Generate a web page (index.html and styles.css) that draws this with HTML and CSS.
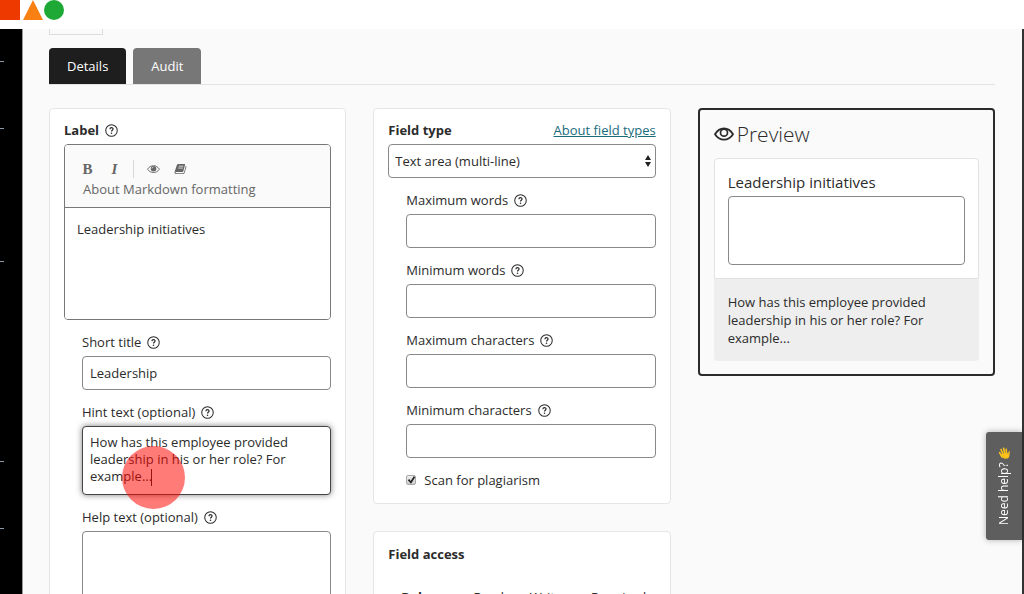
FILE: index.html
```html
<!DOCTYPE html>
<html lang="en">

<head>
  <meta charset="UTF-8">
  <meta name="viewport" content="width=device-width, initial-scale=1.0">
  <title>Edit field</title>
  <link rel="stylesheet" href="styles.css">
</head>

<body>

  <!-- shared icon for the help buttons -->
  <svg class="sprite" aria-hidden="true">
    <symbol id="help" viewBox="0 0 14 14">
      <circle cx="7" cy="7" r="6.2" fill="none" stroke="currentColor" stroke-width="1.1"/>
      <path d="M5.3 5.6C5.3 3.5 8.7 3.5 8.7 5.5C8.7 6.8 7 6.7 7 8.2" fill="none" stroke="currentColor" stroke-width="1.3"/>
      <circle cx="7" cy="10" r=".85" fill="currentColor"/>
    </symbol>
  </svg>

  <header class="topbar">
    <svg class="logo" viewBox="0 0 64 20" aria-hidden="true">
      <rect width="20" height="20" fill="#ee3a00"/>
      <path d="M33 0L43 20H23Z" fill="#f98012"/>
      <circle cx="54" cy="10" r="10" fill="#1ea836"/>
    </svg>
  </header>

  <div class="app">
    <nav class="sidebar">
      <ul class="marks"><li></li><li></li></ul>
      <ul class="marks"><li></li></ul>
      <ul class="marks marks-far"><li></li><li></li></ul>
    </nav>

    <main class="content">
      <div class="crumb"></div>

      <div class="tabs">
        <button type="button" class="tab active">Details</button>
        <button type="button" class="tab">Audit</button>
      </div>

      <div class="columns">
        <section class="card">
          <div class="label-row">
            <label class="strong" for="label">Label</label>
            <button type="button" class="help" aria-label="Help"><svg><use href="#help"/></svg></button>
          </div>
          <div class="editor">
            <div class="toolbar">
              <div class="tools">
                <button type="button" class="tool">B</button>
                <button type="button" class="tool italic">I</button>
                <span class="divider"></span>
                <button type="button" class="tool" aria-label="Preview">
                  <svg viewBox="0 0 14 12">
                    <path d="M.6 6.2C3.8 1.2 10.2 1.2 13.4 6.2C10.2 11 3.8 11 .6 6.2Z" fill="none" stroke="currentColor"/>
                    <circle cx="7" cy="5.7" r="3" fill="currentColor"/>
                    <path d="M5.3 5.5Q5.4 4 7 3.9" fill="none" stroke="#fff" stroke-width=".7"/>
                  </svg>
                </button>
                <button type="button" class="tool" aria-label="Guide">
                  <svg viewBox="0 0 14 12">
                    <path d="M4.5 .7H11.2Q12.2 .7 11.9 1.7L10 8.3Q9.7 9.2 8.8 9.2H2.4Q1.3 9.2 1.6 10Q1.8 10.5 2.6 10.5H9.7Q10.5 10.5 10.8 9.6L12.8 2.6Q13.6 3 13.3 3.9L11.4 10.3Q11 11.5 9.8 11.5H2.4Q.9 11.5 .6 10.1Q.5 9.4 .8 8.8L3 2Q3.4 .7 4.5 .7Z" fill="currentColor"/>
                    <path d="M5.2 3H10.1M4.6 5H9.5" stroke="#fafafa" stroke-width=".8"/>
                  </svg>
                </button>
              </div>
              <a class="md-link" href="#">About Markdown formatting</a>
            </div>
            <textarea id="label" class="editor-text">Leadership initiatives</textarea>
          </div>

          <div class="indent">
            <div class="label-row">
              <label for="short">Short title</label>
              <button type="button" class="help" aria-label="Help"><svg><use href="#help"/></svg></button>
            </div>
            <input type="text" class="control" id="short" value="Leadership">

            <div class="label-row">
              <label for="hint">Hint text (optional)</label>
              <button type="button" class="help" aria-label="Help"><svg><use href="#help"/></svg></button>
            </div>
            <div class="hint">
              <textarea class="control area focused" id="hint">How has this employee provided leadership in his or her role? For example...</textarea>
              <span class="caret"></span>
              <span class="click-spot"></span>
            </div>

            <div class="label-row">
              <label for="helptext">Help text (optional)</label>
              <button type="button" class="help" aria-label="Help"><svg><use href="#help"/></svg></button>
            </div>
            <textarea class="control area tall" id="helptext"></textarea>
          </div>
        </section>

        <div class="stack">
          <section class="card">
            <div class="label-row">
              <label class="strong" for="type">Field type</label>
              <a class="about" href="#">About field types</a>
            </div>
            <div class="select">
              <select class="control" id="type">
                <option>Text area (multi-line)</option>
              </select>
              <svg class="arrows" viewBox="0 0 6 12" aria-hidden="true"><path d="M0 5L3 0L6 5ZM0 7L3 12L6 7Z" fill="#222"/></svg>
            </div>

            <div class="indent">
              <div class="label-row">
                <label for="maxw">Maximum words</label>
                <button type="button" class="help" aria-label="Help"><svg><use href="#help"/></svg></button>
              </div>
              <input type="text" class="control" id="maxw">

              <div class="label-row">
                <label for="minw">Minimum words</label>
                <button type="button" class="help" aria-label="Help"><svg><use href="#help"/></svg></button>
              </div>
              <input type="text" class="control" id="minw">

              <div class="label-row">
                <label for="maxc">Maximum characters</label>
                <button type="button" class="help" aria-label="Help"><svg><use href="#help"/></svg></button>
              </div>
              <input type="text" class="control" id="maxc">

              <div class="label-row">
                <label for="minc">Minimum characters</label>
                <button type="button" class="help" aria-label="Help"><svg><use href="#help"/></svg></button>
              </div>
              <input type="text" class="control" id="minc">

              <label class="check"><input type="checkbox" checked>Scan for plagiarism</label>
            </div>
          </section>

          <section class="card">
            <h2 class="card-title">Field access</h2>
            <table class="access">
              <thead>
                <tr><th class="col-role">Role</th><td class="col-read">Read</td><td class="col-write">Write</td><td>Required</td></tr>
              </thead>
            </table>
          </section>
        </div>

        <section class="preview">
          <h2 class="preview-title">
            <svg viewBox="0 0 20 14" aria-hidden="true">
              <path d="M1 7.2C5.5-.4 14.5-.4 19 7.2C14.5 14.4 5.5 14.4 1 7.2Z" fill="none" stroke="currentColor" stroke-width="1.8"/>
              <circle cx="10" cy="5.7" r="3.5" fill="none" stroke="currentColor" stroke-width="1.7"/>
            </svg>
            Preview
          </h2>
          <div class="preview-field">
            <label for="sample">Leadership initiatives</label>
            <textarea class="control area" id="sample"></textarea>
          </div>
          <p class="preview-hint">How has this employee provided leadership in his or her role? For example...</p>
        </section>
      </div>
    </main>
  </div>

  <button type="button" class="need-help">
    Need help?
    <svg viewBox="0 0 12 12" aria-hidden="true">
      <path d="M4 10L1.6 5.7M5.5 8.5L3 2.5M7 8L5.6 1.3M8.6 8L8.2 2.3" stroke="#fcc21b" stroke-width="1.6" stroke-linecap="round"/>
      <path d="M3 7.3L9 6L10.2 6.4L10.7 4.3Q11.7 3.6 11.8 5L11.3 9Q10.8 11.7 8 11.7Q5 11.8 3.7 9.5Z" fill="#fcc21b"/>
    </svg>
  </button>

</body>

</html>
```

FILE: styles.css
```css
* {
  box-sizing: border-box;
}
body {
  margin: 0;
  height: 100vh;
  overflow: hidden;
  display: flex;
  flex-direction: column;
  font-family: "Open Sans", "Noto Sans", sans-serif;
  font-size: 13px;
  line-height: 18px;
  color: #2b2b2b;
  background-color: #fff;
}
button, input, select, textarea {
  font: inherit;
  color: inherit;
  margin: 0;
}
button {
  border: none;
  padding: 0;
  background: none;
  cursor: pointer;
}
.sprite {
  display: none;
}
.topbar {
  height: 29px;
  flex: none;
}
.logo {
  display: block;
  width: 64px;
  height: 20px;
}
.app {
  flex: 1;
  min-height: 0;
  display: flex;
  overflow: hidden;
  background-color: #fafafa;
  border-right: 2px solid #333;
}
.sidebar {
  width: 23px;
  flex: none;
  padding-top: 32px;
  background-color: #000;
  border-right: 1px solid #999;
}
.marks {
  list-style: none;
  margin: 0 0 66px;
  padding: 0;
}
.marks-far {
  margin-top: 133px;
}
.marks li {
  width: 4px;
  height: 67px;
  border-top: 1px solid #8b97a3;
}
.content {
  flex: 1;
  min-width: 0;
  padding: 0 27px 0 26px;
}
.crumb {
  width: 54px;
  height: 6px;
  border: 1px solid #ddd;
  border-top: none;
}
.tabs {
  display: flex;
  gap: 7px;
  margin-top: 13px;
  border-bottom: 1px solid #e2e2e2;
}
.tab {
  height: 36px;
  padding: 0 18px;
  color: #fff;
  background-color: #777;
  border-radius: 4px 4px 0 0;
}
.tab.active {
  background-color: #1e1e1e;
}
.columns {
  display: grid;
  grid-template-columns: repeat(3, minmax(0, 1fr));
  gap: 27px;
  align-items: start;
  margin-top: 23px;
}
.card {
  padding: 12px 14px 14px;
  background-color: #fff;
  border: 1px solid #e6e6e6;
  border-radius: 4px;
}
.stack {
  display: flex;
  flex-direction: column;
  gap: 27px;
}
.label-row {
  display: flex;
  align-items: center;
  gap: 6px;
  height: 18px;
  margin-bottom: 5px;
}
.strong {
  font-weight: bold;
}
.help, .help svg {
  display: block;
  width: 13px;
  height: 13px;
}
.indent {
  padding-left: 18px;
}
.indent .label-row {
  margin-top: 13px;
}
.control {
  display: block;
  width: 100%;
  height: 34px;
  padding: 0 7px;
  background-color: #fff;
  border: 1px solid #888;
  border-radius: 4px;
  outline: none;
}
.area {
  height: 69px;
  padding: 7px;
  resize: none;
}
.tall {
  height: 120px;
}
.editor {
  border: 1px solid #777;
  border-radius: 4px;
  overflow: hidden;
}
.toolbar {
  padding: 12px 18px 9px;
  color: #666;
  background-color: #fafafa;
  border-bottom: 1px solid #777;
}
.tools {
  display: flex;
  align-items: center;
  gap: 6px;
  height: 23px;
  margin-left: -6px;
}
.tool {
  width: 21px;
  font-family: "Liberation Serif", serif;
  font-size: 15px;
  font-weight: bold;
}
.tool.italic {
  font-style: italic;
}
.tool svg {
  display: block;
  width: 13px;
  height: 12px;
  margin: auto;
}
.divider {
  height: 18px;
  margin: 0 3px 0 2px;
  border-left: 1px solid #d9d9d9;
}
.md-link {
  display: block;
  color: #666;
  text-decoration: none;
}
.editor-text {
  display: block;
  width: 100%;
  height: 111px;
  padding: 12px;
  border: none;
  outline: none;
  resize: none;
}
.hint {
  position: relative;
}
.focused {
  line-height: 17px;
  border-color: #444;
  box-shadow: 0 0 6px rgba(0,0,0,0.5);
}
.caret {
  position: absolute;
  left: 69px;
  top: 43px;
  width: 1px;
  height: 17px;
  background-color: #222;
}
.click-spot {
  position: absolute;
  left: 40px;
  top: 20px;
  width: 63px;
  height: 63px;
  border-radius: 50%;
  background-color: rgba(255,5,0,0.53);
  pointer-events: none;
}
.about {
  margin-left: auto;
  color: #1a6b7c;
}
.select {
  position: relative;
}
.select select {
  appearance: none;
  padding: 0 6px;
}
.arrows {
  position: absolute;
  right: 5px;
  top: 11px;
  width: 6px;
  height: 12px;
  pointer-events: none;
}
.check {
  display: flex;
  align-items: center;
  gap: 8px;
  margin-top: 13px;
}
.check input {
  appearance: none;
  width: 10px;
  height: 10px;
  border: 1px solid #aaa;
  border-radius: 2px;
  background: linear-gradient(#eee, #ccc);
}
.check input::before {
  content: "";
  display: block;
  width: 8px;
  height: 8px;
  background-color: #222;
  clip-path: polygon(6% 52%, 24% 38%, 42% 62%, 80% 2%, 100% 14%, 46% 98%);
}
.card-title {
  margin: 0;
  font-size: 13px;
  line-height: 20px;
}
.access {
  width: 100%;
  margin-top: 24px;
  border-collapse: collapse;
  table-layout: fixed;
}
.access th, .access td {
  padding: 0 0 0 13px;
  text-align: left;
}
.access .col-role {
  width: 27%;
}
.access .col-read {
  width: 21%;
}
.access .col-write {
  width: 23%;
}
.preview {
  padding: 12px 14px 13px;
  border: 2px solid #2b2b2b;
  border-radius: 4px;
}
.preview-title {
  display: flex;
  align-items: center;
  gap: 3px;
  margin: 0 0 12px;
  font-size: 21px;
  line-height: 24px;
  font-weight: 300;
}
.preview-title svg {
  width: 20px;
  height: 14px;
}
.preview-field {
  padding: 14px 13px 13px;
  background-color: #fff;
  border: 1px solid #e2e2e2;
  border-radius: 4px 4px 0 0;
}
.preview-field label {
  display: block;
  margin-bottom: 5px;
  font-size: 15px;
}
.preview-hint {
  margin: 0;
  padding: 14px;
  background-color: #eee;
  border-radius: 0 0 4px 4px;
}
.need-help {
  position: fixed;
  right: 2px;
  bottom: 54px;
  display: flex;
  align-items: center;
  justify-content: center;
  gap: 4px;
  width: 36px;
  height: 108px;
  font-size: 12px;
  color: #fff;
  background-color: #5e5e5e;
  border-radius: 0 3px 3px 0;
  box-shadow: 0 0 6px rgba(0,0,0,0.3);
  writing-mode: vertical-rl;
  transform: rotate(180deg);
}
.need-help svg {
  width: 12px;
  height: 12px;
  transform: rotate(180deg);
}
```
